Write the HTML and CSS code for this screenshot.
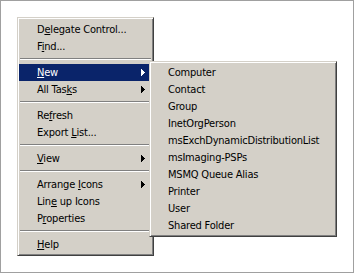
FILE: index.html
```html
<!DOCTYPE html>
<html lang="en">
<head>
    <meta charset="UTF-8">
    <title>Context Menu</title>
    <link rel="stylesheet" href="styles.css">
</head>
<body>
    <div class="frame">
        <div class="menu main-menu">
            <div class="item"><span>D<u>e</u>legate Control...</span></div>
            <div class="item"><span>F<u>i</u>nd...</span></div>
            <div class="sep"></div>
            <div class="item active"><span><u>N</u>ew</span><svg class="arrow" width="4" height="7" viewBox="0 0 4 7"><path d="M0 0h1v1h1v1h1v1h1v1h-1v1h-1v1h-1v1h-1z"/></svg></div>
            <div class="item"><span>All Tas<u>k</u>s</span><svg class="arrow" width="4" height="7" viewBox="0 0 4 7"><path d="M0 0h1v1h1v1h1v1h1v1h-1v1h-1v1h-1v1h-1z"/></svg></div>
            <div class="sep"></div>
            <div class="item"><span>Re<u>f</u>resh</span></div>
            <div class="item"><span>Export <u>L</u>ist...</span></div>
            <div class="sep"></div>
            <div class="item"><span><u>V</u>iew</span><svg class="arrow" width="4" height="7" viewBox="0 0 4 7"><path d="M0 0h1v1h1v1h1v1h1v1h-1v1h-1v1h-1v1h-1z"/></svg></div>
            <div class="sep"></div>
            <div class="item"><span>Arrange <u>I</u>cons</span><svg class="arrow" width="4" height="7" viewBox="0 0 4 7"><path d="M0 0h1v1h1v1h1v1h1v1h-1v1h-1v1h-1v1h-1z"/></svg></div>
            <div class="item"><span>Lin<u>e</u> up Icons</span></div>
            <div class="item"><span>P<u>r</u>operties</span></div>
            <div class="sep"></div>
            <div class="item"><span><u>H</u>elp</span></div>
        </div>

        <!-- submenu for "New" -->
        <div class="menu sub-menu">
            <div class="item">Computer</div>
            <div class="item">Contact</div>
            <div class="item">Group</div>
            <div class="item">InetOrgPerson</div>
            <div class="item">msExchDynamicDistributionList</div>
            <div class="item">msImaging-PSPs</div>
            <div class="item">MSMQ Queue Alias</div>
            <div class="item">Printer</div>
            <div class="item">User</div>
            <div class="item">Shared Folder</div>
        </div>
    </div>
</body>
</html>
```

FILE: styles.css
```css
body {
    margin: 0;
    background-color: #ffffff;
    font-family: "DejaVu Sans Condensed", "Liberation Sans", sans-serif;
    font-size: 11px;
    letter-spacing: -0.2px;
}
.frame {
    position: relative;
    width: 336px;
    height: 255px;
    padding: 16px 0 0 16px;
    border: 1px solid #a0a0a0;
    background-color: #ffffff;
}
.menu {
    background-color: #d4d0c8;
    color: #000000;
    border-top: 1px solid #d4d0c8;
    border-left: 1px solid #d4d0c8;
    border-right: 1px solid #404040;
    border-bottom: 1px solid #404040;
    box-shadow: inset 1px 1px 0 #ffffff, inset -1px -1px 0 #808080;
    box-sizing: border-box;
}
.main-menu {
    width: 137px;
    height: 239px;
    padding: 3px 1px 2px 1px;
}
.sub-menu {
    position: absolute;
    left: 148px;
    top: 60px;
    width: 188px;
    height: 176px;
    padding: 2px 1px;
}
.item {
    display: flex;
    align-items: center;
    height: 17px;
    line-height: 17px;
    padding: 0 7px 0 18px;
    white-space: nowrap;
}
.sub-menu .item {
    padding-left: 17px;
}
.item u {
    text-decoration-thickness: 1px;
    text-underline-offset: 1px;
}
.item.active {
    background-color: #0a246a;
    color: #ffffff;
}
.arrow {
    margin-left: auto;
    fill: currentColor;
}
.sep {
    height: 0;
    margin: 3px 1px 4px 1px;
    border-top: 1px solid #808080;
    border-bottom: 1px solid #ffffff;
}
```
